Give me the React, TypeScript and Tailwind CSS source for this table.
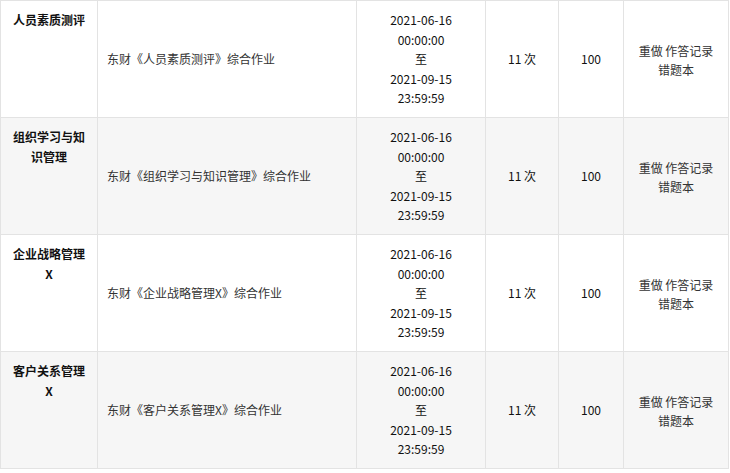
import React from "react";

const rows = [
  { name: "人员素质测评", title: "东财《人员素质测评》综合作业", bg: "bg-white" },
  { name: "组织学习与知识管理", title: "东财《组织学习与知识管理》综合作业", bg: "bg-[#f6f6f6]" },
  { name: "企业战略管理X", title: "东财《企业战略管理X》综合作业", bg: "bg-white" },
  { name: "客户关系管理X", title: "东财《客户关系管理X》综合作业", bg: "bg-[#f6f6f6]" },
];

export default function App() {
  return (
    <div
      className="bg-white text-[12px] text-[#333]"
      style={{ fontFamily: '"Microsoft YaHei", "Noto Sans CJK SC", "Noto Sans", sans-serif' }}
    >
      <table className="w-[728px] table-fixed border-collapse">
        <colgroup>
          <col className="w-[97px]" />
          <col className="w-[259px]" />
          <col className="w-[129px]" />
          <col className="w-[73px]" />
          <col className="w-[65px]" />
          <col className="w-[105px]" />
        </colgroup>
        <tbody>
          {rows.map((r) => (
            <tr key={r.name} className={r.bg}>
              <td className="border border-[#e3e3e3] px-[12px] py-[9px] align-top text-center font-bold leading-[20px] text-[#111]">
                {r.name}
              </td>
              <td className="border border-[#e3e3e3] px-[9px] align-middle leading-[20px]">
                {r.title}
              </td>
              <td className="border border-[#e3e3e3] px-[4px] py-[9px] text-center align-middle leading-[19.6px] text-[#111]">
                <div>2021-06-16</div>
                <div>00:00:00</div>
                <div>至</div>
                <div>2021-09-15</div>
                <div>23:59:59</div>
              </td>
              <td className="border border-[#e3e3e3] text-center align-middle leading-[20px] text-[#111]">
                11 次
              </td>
              <td className="border border-[#e3e3e3] text-center align-middle leading-[20px] text-[#111]">
                100
              </td>
              <td className="border border-[#e3e3e3] px-[4px] text-center align-middle leading-[19.5px]">
                <div className="pt-[3px]">
                  <div>
                    <span>重做</span> <span>作答记录</span>
                  </div>
                  <div>错题本</div>
                </div>
              </td>
            </tr>
          ))}
        </tbody>
      </table>
    </div>
  );
}
